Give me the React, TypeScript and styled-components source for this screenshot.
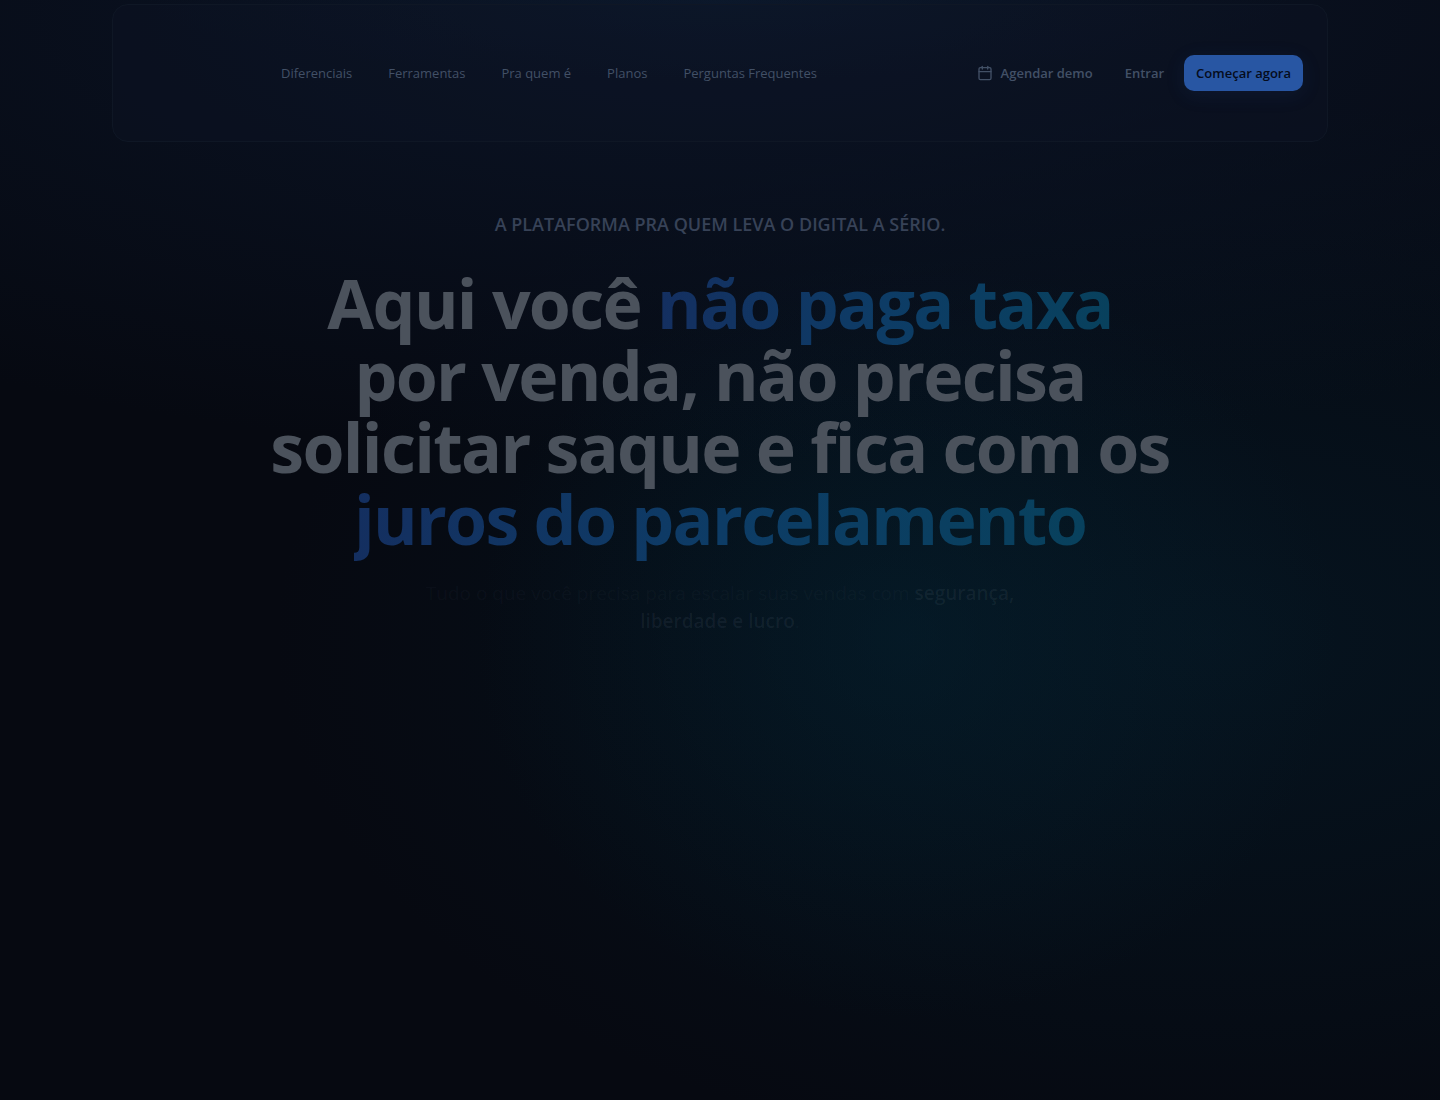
import React from "react";
import styled, { createGlobalStyle } from "styled-components";
import { Calendar } from "lucide-react";

const GlobalStyle = createGlobalStyle`
  *, *::before, *::after { box-sizing: border-box; }
  body {
    margin: 0;
    background: #060911;
    font-family: "Segoe UI", "Open Sans", "Noto Sans", sans-serif;
  }
`;

const Page = styled.div`
  min-height: 100vh;
  padding-top: 4px;
  background:
    radial-gradient(ellipse 40% 80px at 50% 0, rgba(14, 38, 58, 0.2), transparent),
    radial-gradient(ellipse 90% 460px at 50% 0, rgba(13, 25, 48, 0.7), transparent),
    radial-gradient(ellipse 430px 380px at 63% 58%, rgba(4, 38, 54, 0.42), transparent),
    radial-gradient(ellipse 65% 540px at 84% 58%, rgba(5, 34, 50, 0.42), transparent),
    #060911;
`;

const Header = styled.header`
  display: flex;
  align-items: center;
  gap: 32px;
  max-width: 1216px;
  margin: 0 auto;
  padding: 12px 24px;
  border: 1px solid #0f1725;
  border-radius: 16px;
  background: rgba(13, 19, 36, 0.35);
`;

const LogoLink = styled.a`
  width: 112px;
  height: 112px;
  flex: none;
`;

const Nav = styled.nav`
  display: flex;
  flex: 1;
  gap: 36px;
`;

const NavLink = styled.a`
  color: #425066;
  font-size: 13px;
  line-height: 20px;
  text-decoration: none;
  white-space: nowrap;
`;

const Actions = styled.div`
  display: flex;
  gap: 8px;
`;

const Button = styled.button<{ $primary?: boolean }>`
  display: flex;
  align-items: center;
  gap: 8px;
  height: 36px;
  padding: 0 12px;
  border: 0;
  border-radius: 10px;
  background: ${(p) => (p.$primary ? "#2856a3" : "transparent")};
  box-shadow: ${(p) => (p.$primary ? "0 4px 20px rgba(40, 86, 163, 0.12)" : "none")};
  color: ${(p) => (p.$primary ? "#050c1c" : "#425066")};
  font: 600 13px/20px "Segoe UI", "Open Sans", "Noto Sans", sans-serif;
  white-space: nowrap;
`;

const Hero = styled.main`
  display: flex;
  flex-direction: column;
  align-items: center;
  padding: 68px 24px 0;
  text-align: center;
`;

const Eyebrow = styled.p`
  margin: 0;
  color: #374257;
  font-size: 18px;
  font-weight: 600;
  line-height: 28px;
  text-transform: uppercase;
`;

const Title = styled.h1`
  margin: 29px 0 0;
  color: #4b525c;
  font-size: 68px;
  font-weight: 700;
  line-height: 72px;
  letter-spacing: -0.025em;
`;

const Line = styled.span`
  display: block;
`;

const Accent = styled.span`
  background: linear-gradient(90deg, #142f60, #0d3c66 50%, #08415d);
  background-clip: text;
  -webkit-background-clip: text;
  color: transparent;
`;

const Lead = styled.p`
  max-width: 640px;
  margin: 24px 0 0;
  color: rgba(148, 163, 184, 0.05);
  font-size: 19px;
  line-height: 28px;
`;

const Strong = styled.strong`
  color: rgba(190, 205, 225, 0.07);
  font-weight: 600;
`;

const links = ["Diferenciais", "Ferramentas", "Pra quem é", "Planos", "Perguntas Frequentes"];

export default function App() {
  return (
    <>
      <GlobalStyle />
      <Page>
        <Header>
          <LogoLink href="#" />
          <Nav>
            {links.map((label) => (
              <NavLink href="#" key={label}>{label}</NavLink>
            ))}
          </Nav>
          <Actions>
            <Button type="button"><Calendar size={16} />Agendar demo</Button>
            <Button type="button">Entrar</Button>
            <Button type="button" $primary>Começar agora</Button>
          </Actions>
        </Header>
        <Hero>
          <Eyebrow>A plataforma pra quem leva o digital a sério.</Eyebrow>
          <Title>
            <Line>Aqui você <Accent>não paga taxa</Accent></Line>
            <Line>por venda, não precisa</Line>
            <Line>solicitar saque e fica com os</Line>
            <Line><Accent>juros do parcelamento</Accent></Line>
          </Title>
          <Lead>
            Tudo o que você precisa para escalar suas vendas com <Strong>segurança, liberdade e lucro</Strong>.
          </Lead>
        </Hero>
      </Page>
    </>
  );
}
